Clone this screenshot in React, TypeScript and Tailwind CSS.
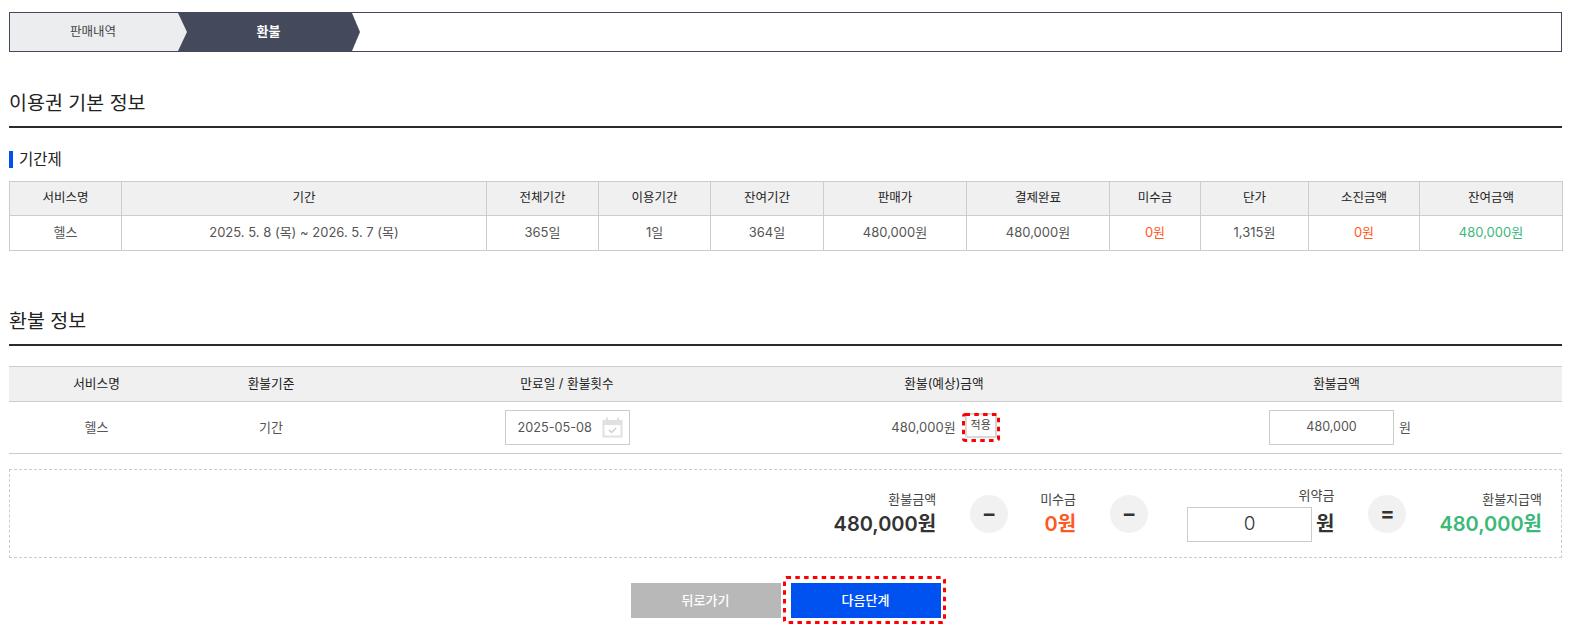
const font = "font-['Inter','Noto_Sans_CJK_KR',sans-serif]";

const basicHead = ["서비스명", "기간", "전체기간", "이용기간", "잔여기간", "판매가", "결제완료", "미수금", "단가", "소진금액", "잔여금액"];
const basicWidths = ["w-[112px]", "w-[365px]", "w-[112px]", "w-[112px]", "w-[113px]", "w-[143px]", "w-[143px]", "w-[91px]", "w-[108px]", "w-[111px]", "w-[143px]"];
const basicRow = [
  { text: "헬스" },
  { text: "2025. 5. 8 (목) ~ 2026. 5. 7 (목)" },
  { text: "365일" },
  { text: "1일" },
  { text: "364일" },
  { text: "480,000원" },
  { text: "480,000원" },
  { text: "0원", color: "text-[#ff5722]" },
  { text: "1,315원" },
  { text: "0원", color: "text-[#ff5722]" },
  { text: "480,000원", color: "text-[#3cb878]" },
];

function SectionTitle({ children, className }: { children: React.ReactNode; className: string }) {
  return (
    <h2 className={`border-b-2 border-[#2b2b2b] text-[19.5px] leading-[30px] font-normal text-[#222] pt-[2px] pb-[8px] ${className}`}>
      {children}
    </h2>
  );
}

function Operator({ sign }: { sign: string }) {
  return (
    <div className="w-[38px] h-[38px] rounded-full bg-[#f1f1f1] flex items-center justify-center text-[22px] font-semibold text-[#333] shrink-0">
      {sign}
    </div>
  );
}

function Amount({ label, value, color }: { label: string; value: string; color: string }) {
  return (
    <div className="text-right pt-[1px]">
      <div className="text-[13px] leading-[18px] text-[#444]">{label}</div>
      <div className={`text-[20px] leading-[28px] font-semibold mt-[2px] ${color}`}>{value}</div>
    </div>
  );
}

// dashed red focus mark sitting over a button
function FocusRing({ w, h, className }: { w: number; h: number; className: string }) {
  return (
    <svg width={w} height={h} className={`absolute pointer-events-none ${className}`} fill="none">
      <rect x="1.5" y="1.5" width={w - 3} height={h - 3} rx="2" stroke="#f00" strokeWidth="3" strokeDasharray="4.5 4.3" />
    </svg>
  );
}

export default function App() {
  return (
    <div className={`${font} bg-white min-h-[625px] px-[9px] pt-[12px] text-[12px] text-[#555]`}>
      <div className="h-[40px] border border-[#444a5c] flex bg-white">
        <div className="relative z-10 w-[177px] h-full bg-[#ecedef] flex items-center justify-center text-[12.5px] text-[#444] pr-[11px] [clip-path:polygon(0_0,168px_0,177px_50%,168px_100%,0_100%)]">
          판매내역
        </div>
        <div className="w-[182px] h-full -ml-[9px] bg-[#444a5c] flex items-center justify-center text-[13px] font-semibold text-white pr-[1px] [clip-path:polygon(0_0,174px_0,182px_50%,174px_100%,0_100%)]">
          환불
        </div>
      </div>

      <SectionTitle className="mt-[34px]">이용권 기본 정보</SectionTitle>

      <div className="mt-[22px] flex items-center h-[18px]">
        <span className="w-[4px] h-[17px] bg-[#0052f0]" />
        <span className="ml-[6px] pt-[2px] text-[15.5px] text-[#222]">기간제</span>
      </div>

      <table className="mt-[13px] w-full table-fixed border-collapse text-[12.5px]">
        <thead>
          <tr className="h-[34px] bg-[#f0f0f0]">
            {basicHead.map((h, i) => (
              <th key={h} className={`${basicWidths[i]} border border-[#ccc] font-normal text-[#222]`}>
                {h}
              </th>
            ))}
          </tr>
        </thead>
        <tbody>
          <tr className="h-[35px]">
            {basicRow.map((c, i) => (
              <td key={i} className={`border border-[#ccc] text-center text-[13px] ${c.color ?? "text-[#555]"}`}>
                {c.text}
              </td>
            ))}
          </tr>
        </tbody>
      </table>

      <SectionTitle className="mt-[53px]">환불 정보</SectionTitle>

      <table className="mt-[20px] w-full table-fixed border-collapse">
        <thead>
          <tr className="h-[35px] bg-[#f0f0f0] border-y border-[#ccc] text-[12.7px] text-[#222]">
            <th className="w-[175px] font-normal">서비스명</th>
            <th className="w-[174px] font-normal">환불기준</th>
            <th className="w-[418px] font-normal">만료일 / 환불횟수</th>
            <th className="w-[350px] font-normal pr-[14px]">환불(예상)금액</th>
            <th className="font-normal pr-[15px]">환불금액</th>
          </tr>
        </thead>
        <tbody>
          <tr className="h-[52px] border-b border-[#ccc] text-center text-[13px] text-[#555]">
            <td>헬스</td>
            <td>기간</td>
            <td>
              <div className="inline-flex items-center w-[125px] h-[35px] border border-[#ccc] pl-[12px] pr-[6px] justify-between">
                <span className="text-[12.7px]">2025-05-08</span>
                <svg width="21" height="21" viewBox="0 0 21 21" fill="none">
                  <rect x="0.5" y="3" width="20" height="17.5" fill="#e0e0e0" />
                  <rect x="2.5" y="8" width="16" height="10.5" fill="#fff" />
                  <rect x="4" y="0.5" width="2" height="5" fill="#e0e0e0" />
                  <rect x="15" y="0.5" width="2" height="5" fill="#e0e0e0" />
                  <path d="M7 13l2.5 2.5 4.5-4.5" stroke="#d0d0d0" strokeWidth="1.5" />
                </svg>
              </div>
            </td>
            <td>
              <div className="inline-flex items-center gap-[9px] mr-[14px]">
                <span>480,000원</span>
                <button className="relative w-[32px] h-[25px] -mt-[5px] border-2 border-[#d8d8d8] text-[11px] text-[#444] rounded-[2px]">
                  적용
                  <FocusRing w={38} h={29} className="-left-[5px] -top-[2px]" />
                </button>
              </div>
            </td>
            <td className="pr-[8px]">
              <div className="inline-flex items-center gap-[5px]">
                <div className="w-[125px] h-[35px] border border-[#ccc] flex items-center justify-center text-[12.5px]">480,000</div>
                <span>원</span>
              </div>
            </td>
          </tr>
        </tbody>
      </table>

      <div className="mt-[15px] h-[89px] border border-dashed border-[#ccc] flex items-center justify-end pr-[19px]">
        <Amount label="환불금액" value="480,000원" color="text-[#333]" />
        <div className="ml-[34px] mr-[32px]"><Operator sign="−" /></div>
        <Amount label="미수금" value="0원" color="text-[#ff5722]" />
        <div className="ml-[34px] mr-[39px]"><Operator sign="−" /></div>
        <div className="text-right">
          <div className="text-[13px] leading-[18px] text-[#444]">위약금</div>
          <div className="flex items-center gap-[4px] mt-[3px]">
            <div className="w-[125px] h-[35px] border border-[#ccc] flex items-center justify-center text-[19px] font-light text-[#333]">0</div>
            <span className="text-[20px] font-semibold text-[#333]">원</span>
          </div>
        </div>
        <div className="ml-[34px] mr-[33px]"><Operator sign="=" /></div>
        <Amount label="환불지급액" value="480,000원" color="text-[#3cb878]" />
      </div>

      <div className="mt-[25px] flex justify-center gap-[10px] text-[13px] font-medium text-white">
        <button className="w-[150px] h-[35px] bg-[#b8b8b8]">뒤로가기</button>
        <button className="relative w-[150px] h-[35px] bg-[#0052f0]">
          다음단계
          <FocusRing w={163} h={48} className="-left-[8px] -top-[7px]" />
        </button>
      </div>
    </div>
  );
}
